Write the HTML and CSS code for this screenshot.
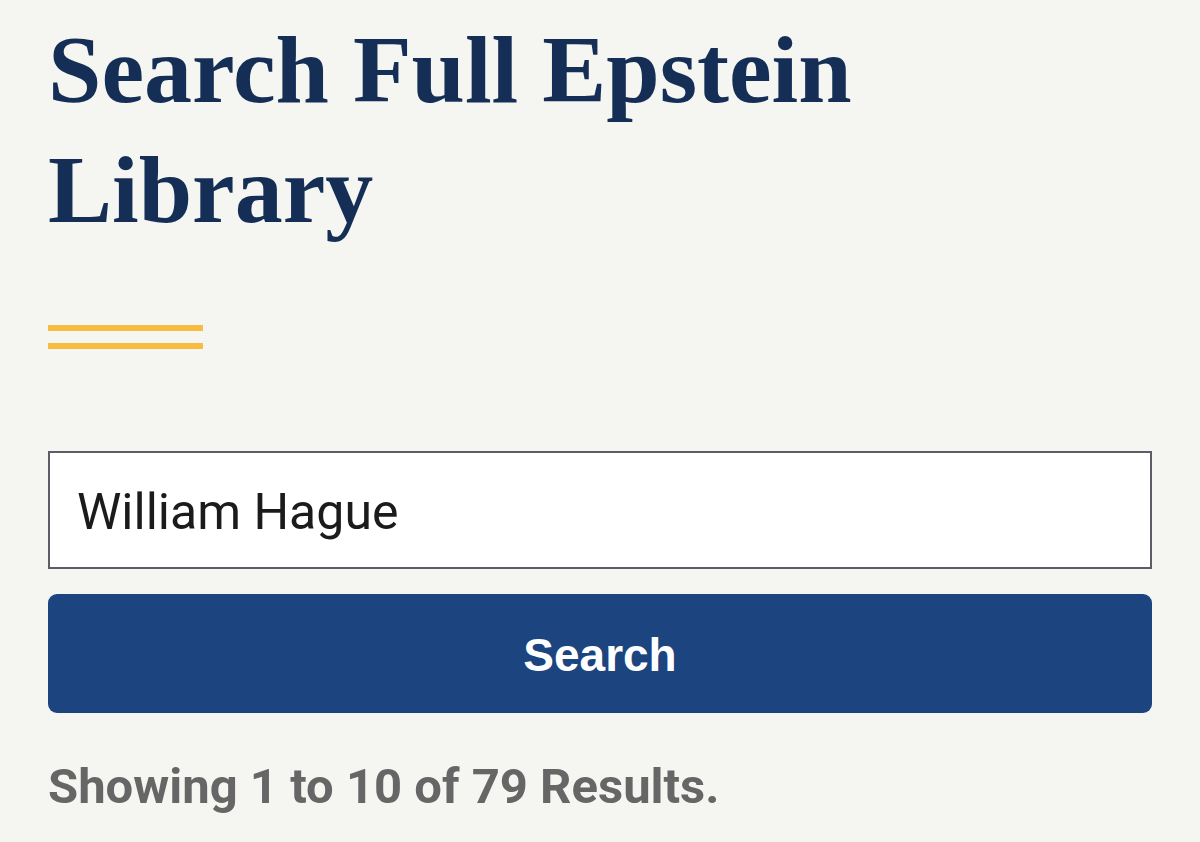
FILE: index.html
```html
<!DOCTYPE html>
<html lang="en">
<head>
<meta charset="utf-8">
<title>Search Full Epstein Library</title>
<link rel="stylesheet" href="styles.css">
</head>
<body>
<main class="page">
  <h1 class="title">Search Full Epstein Library</h1>
  <div class="rule"><span></span><span></span></div>
  <form class="search">
    <input class="search-input" type="text" value="William Hague" aria-label="Search">
    <button class="search-btn" type="button">Search</button>
  </form>
  <p class="results">Showing 1 to 10 of 79 Results.</p>
</main>
</body>
</html>
```

FILE: styles.css
```css
html, body {
  margin: 0;
  padding: 0;
  background: #f5f5f2;
}
.page {
  padding: 10px 48px 0 48px;
  width: 1104px;
}
.title {
  margin: 0;
  font-family: "Liberation Serif", serif;
  font-weight: bold;
  font-size: 96px;
  line-height: 120px;
  color: #152e55;
  width: 900px;
}
.rule {
  margin-top: 75px;
  width: 155px;
  display: flex;
  flex-direction: column;
  gap: 12px;
}
.rule span {
  display: block;
  height: 6px;
  background: #f8bd3f;
}
.search {
  margin-top: 102px;
  display: flex;
  flex-direction: column;
  gap: 25px;
}
.search-input {
  box-sizing: border-box;
  width: 100%;
  height: 118px;
  margin: 0;
  border: 2px solid #5c5d66;
  border-radius: 0;
  background: #fff;
  padding: 4px 27px 0 27px;
  font-family: "Roboto", sans-serif;
  font-size: 50px;
  color: #1b1b1b;
  outline: none;
}
.search-btn {
  box-sizing: border-box;
  width: 100%;
  height: 119px;
  margin: 0;
  border: 0;
  border-radius: 9px;
  background: #1c447f;
  color: #fff;
  font-family: "Liberation Sans", Arial, sans-serif;
  font-weight: bold;
  font-size: 46px;
  padding-top: 4px;
}
.results {
  margin: 46px 0 0 0;
  font-family: "Roboto", sans-serif;
  font-weight: bold;
  font-size: 49px;
  line-height: 56px;
  color: #666666;
}
```
